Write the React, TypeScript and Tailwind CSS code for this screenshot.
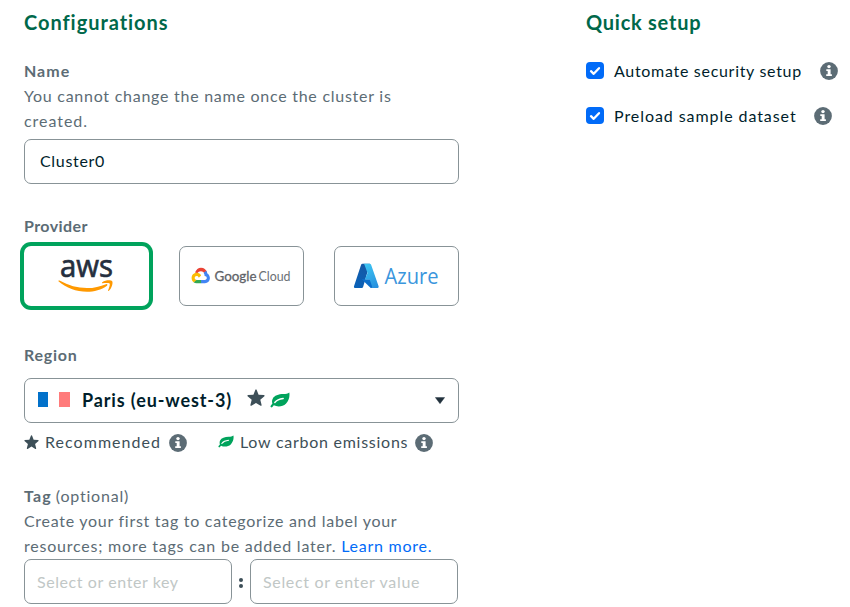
import type { ReactNode } from "react";

function InfoIcon({ className = "" }: { className?: string }) {
  return (
    <svg viewBox="0 0 18 18" className={`h-[18px] w-[18px] shrink-0 ${className}`}>
      <circle cx="9" cy="9" r="8.9" fill="#5c6c75" />
      <circle cx="9" cy="4.6" r="1.7" fill="#fff" />
      <path d="M6.300 7.200h4.300v5.100h1.300v1.700H6.200v-1.700h1.500V8.900H6.300z" fill="#fff" />
    </svg>
  );
}

function StarIcon({ className = "" }: { className?: string }) {
  return (
    <svg viewBox="0 0 18 18" className={`shrink-0 ${className}`}>
      <path
        d="M8.4.7a.65.65 0 0 1 1.2 0l2 5 5.400.400a.65.65 0 0 1 .4 1.100l-4.100 3.500 1.300 5.300a.65.65 0 0 1-1 .7L9 13.900l-4.600 2.800a.65.65 0 0 1-1-.7l1.300-5.300L.6 7.200A.65.65 0 0 1 1 6.100l5.400-.4z"
        fill="#3d4f58"
      />
    </svg>
  );
}

function LeafIcon({ className = "" }: { className?: string }) {
  return (
    <svg viewBox="0 0 20 16" className={`shrink-0 ${className}`}>
      <path
        d="M19.300.6C17.800 1.900 15.900 2 13.400 2.100 8.500 2.200 4.300 3.500 2.600 6.900c-.8 1.700-.7 3.300-.2 4.700L.7 13.700c-.8 1.200.8 2.400 1.700 1.300l1.400-1.700c3.700 1.800 9 1.400 12.100-1.600C18.800 8.900 20 4.500 19.300.6z"
        fill="#00a35c"
      />
      <path d="M4.800 10.500C6.600 8.100 9.300 6.900 13.200 6.500" fill="none" stroke="#fff" strokeWidth="1.400" strokeLinecap="round" />
    </svg>
  );
}

function AwsLogo() {
  return (
    <svg viewBox="0 0 60 48" className="h-12 w-[60px] overflow-visible">
      <text x="3" y="25.200" textLength="53" lengthAdjust="spacingAndGlyphs" fontSize="31.500" fill="#252f3e" stroke="#252f3e" strokeWidth=".7" className="font-['Open_Sans',sans-serif]">
        aws
      </text>
      <path d="M1.700 29.500c-.6-.5-.1-1.300.8-.9C11.500 33.600 20.500 36.100 30 36.100c7 0 13.200-1.500 19-3.900 1.100-.5 2 .7 1 1.500C44.500 37.700 37 39.800 30 39.800c-10.900 0-20.700-4-28.300-10.300z" fill="#ff9900" />
      <path d="M45.500 31.200c-.6 0-.7-.6-.2-1 3.200-2.200 8.700-2.300 9.900-.9 1 1.300-.3 7-3.300 9.500-.5.400-1 .2-.8-.4.900-2.200 2.200-5.700 1.500-6.800-.8-1-4.800-.7-7.100-.4z" fill="#ff9900" />
    </svg>
  );
}

function GoogleCloudLogo() {
  return (
    <svg viewBox="0 0 102 24" className="h-6 w-[102px] overflow-visible">
      <g transform="translate(0 2)">
        <path d="M4 6.600C5 3.700 7.300 1.700 10 1.700c2.900 0 5.200 1.800 6.100 4.500l-2.400 1.800c-.7-1.800-2-2.800-3.900-2.800-1.500 0-2.700.8-3.400 2z" fill="#ea4335" />
        <path d="M15.200 4.700c.6.900 1 1.700 1.200 2.700 1.500.9 2.500 2.600 2.500 4.700 0 2.900-2.100 5.100-4.900 5.100H10v-3.300h3.900c1.100 0 1.900-.8 1.900-1.800 0-1.200-.8-2-2.200-2 0-1.300-.3-2.200-1-3z" fill="#4285f4" />
        <path d="M10.100 13.900v3.300H5.600c-1.200 0-2.200-.4-3-1l2.200-2.400.8.100z" fill="#34a853" />
        <path d="M2.700 16.300C1.400 15.400.6 13.900.6 12.100c0-3 2.100-5.300 5-5.300 2.200 0 3.800 1 4.500 2.800l-2.300 2.200C7.400 10.600 6.700 10 5.700 10c-1.200 0-2 .9-2 2s.9 1.900 1.900 1.900z" fill="#fbbc04" />
      </g>
      <text x="23.500" y="17" textLength="42" lengthAdjust="spacingAndGlyphs" fontSize="13.500" fill="#5f6368" stroke="#5f6368" strokeWidth=".3" className="font-['Lato',sans-serif]">
        Google
      </text>
      <text x="67.500" y="17" textLength="32" lengthAdjust="spacingAndGlyphs" fontSize="13.500" fill="#6b7075" className="font-['Lato',sans-serif]">
        Cloud
      </text>
    </svg>
  );
}

function AzureLogo() {
  return (
    <svg viewBox="0 0 88 36" className="h-9 w-[88px] overflow-visible">
      <defs>
        <linearGradient id="azDark" x1="0.700" y1="0" x2="0.200" y2="1">
          <stop offset="0" stopColor="#1558a5" />
          <stop offset="1" stopColor="#0a62b8" />
        </linearGradient>
        <linearGradient id="azLight" x1="0.300" y1="0" x2="0.700" y2="1">
          <stop offset="0" stopColor="#3cc3f2" />
          <stop offset="1" stopColor="#2892df" />
        </linearGradient>
      </defs>
      <g transform="translate(0.500 4)">
        <path d="M9 1.800h7.400L9.600 25c-.2.600-.7 1-1.400 1H1.800C.8 26 .2 25.100.5 24.200L7.600 2.800c.2-.6.7-1 1.400-1z" fill="url(#azDark)" />
        <path d="M8.200 17.200h10l4.200 8.500-5.200.3z" fill="#0c6fcb" />
        <path d="M9.600 1.800h6.600c.6 0 1.200.4 1.400 1l7.500 21.400c.3.900-.3 1.800-1.300 1.800h-6.500c.9 0 1.500-.9 1.200-1.800l-2.300-6.700h-4.900l2.700-6.400-3-8.300c-.2-.6-.7-1-1.400-1z" fill="url(#azLight)" />
      </g>
      <text x="31.500" y="25.700" textLength="54" lengthAdjust="spacingAndGlyphs" fontSize="22" fill="#3a96dd" className="font-['Open_Sans',sans-serif]">
        Azure
      </text>
    </svg>
  );
}

function CheckRow({ children }: { children: ReactNode }) {
  return (
    <div className="flex h-[25px] items-center">
      <span role="checkbox" aria-checked="true" className="flex h-[17px] w-[18px] shrink-0 items-center justify-center rounded-[4px] bg-[#016bf8]">
        <svg viewBox="0 0 12 10" className="h-[10px] w-3">
          <path d="M2 5.200l2.700 2.600L10 2.200" fill="none" stroke="#fff" strokeWidth="2.300" strokeLinecap="round" strokeLinejoin="round" />
        </svg>
      </span>
      {children}
    </div>
  );
}

export default function App() {
  return (
    <main className="flex h-[607px] w-[850px] overflow-hidden whitespace-nowrap bg-white pl-6 pt-[10px] font-['Lato',sans-serif] text-base leading-[25px] text-[#5c6c75]">
      <section className="w-[435px] shrink-0">
        <h1 className="text-xl font-bold leading-[25px] tracking-[0.96px] text-[#00684a]">Configurations</h1>

        <div className="mt-[23px]">
          <div className="font-bold tracking-[1px]">Name</div>
          <div className="tracking-[0.74px]">You cannot change the name once the cluster is</div>
          <div className="tracking-[0.95px]">created.</div>
          <div className="mt-[6px] flex h-[45px] items-center rounded-[7px] border border-[#889397] px-[15px] pb-[2px] tracking-[0.68px] text-[#001e2b]">
            Cluster0
          </div>
        </div>

        <div className="mt-[29px]">
          <div className="font-bold tracking-[0.43px]">Provider</div>
          <div className="mt-2 grid grid-cols-3 gap-[30px]">
            <div className="flex h-[60px] items-center justify-center rounded-[7px] ring-4 ring-[#00a35c]">
              <AwsLogo />
            </div>
            <div className="flex h-[60px] items-center justify-center rounded-[7px] border border-[#889397]">
              <GoogleCloudLogo />
            </div>
            <div className="flex h-[60px] items-center justify-center rounded-[7px] border border-[#889397]">
              <AzureLogo />
            </div>
          </div>
        </div>

        <div className="mt-9">
          <div className="font-bold tracking-[0.75px]">Region</div>
          <div className="mt-[11px] flex h-[45px] items-center rounded-[7px] border border-[#889397] px-[13px]">
            <span className="mb-[2px] flex h-[15px] w-8 shrink-0 justify-between">
              <span className="w-[10px] bg-[#0271ca]" />
              <span className="w-[11px] bg-[#ff7b7b]" />
            </span>
            <span className="mb-[2px] ml-3 w-[152px] text-lg font-bold tracking-[0.88px] text-[#001e2b]">Paris (eu-west-3)</span>
            <StarIcon className="mb-[5px] ml-[13px] h-[18px] w-[18px]" />
            <LeafIcon className="mb-[2px] ml-[5px] h-4 w-5" />
            <svg viewBox="0 0 10 7" className="ml-auto h-[7px] w-[10px]">
              <path d="M.3.500h9.400L5 6.700z" fill="#21313c" stroke="#21313c" strokeWidth=".4" strokeLinejoin="round" />
            </svg>
          </div>
          <div className="mt-[6px] flex h-[25px] items-center text-[#3d4f58]">
            <StarIcon className="mt-[2px] h-[15px] w-[15px]" />
            <span className="ml-[6px] w-[117px] tracking-[1.04px]">Recommended</span>
            <InfoIcon className="ml-[7px] mt-[2px]" />
            <LeafIcon className="ml-[31px] h-[13px] w-[16px]" />
            <span className="ml-[6px] w-[169px] tracking-[0.74px]">Low carbon emissions</span>
            <InfoIcon className="ml-[6px] mt-[2px]" />
          </div>
        </div>

        <div className="mt-[29px]">
          <div>
            <span className="font-bold tracking-[1.1px]">Tag</span>{" "}
            <span className="tracking-[0.8px]">(optional)</span>
          </div>
          <div className="tracking-[0.72px]">Create your first tag to categorize and label your</div>
          <div>
            <span className="tracking-[0.78px]">resources; more tags can be added later. </span>
            <a href="#learn" className="tracking-[0.75px] text-[#016bf8]">Learn more.</a>
          </div>
          <div className="mt-px flex items-center">
            <div className="flex h-[45px] w-[208px] items-center rounded-[7px] border border-[#889397] px-3 tracking-[0.58px] text-[#c1c7c6]">
              Select or enter key
            </div>
            <div className="flex w-[18px] flex-col items-center gap-[2px] pt-[2px]">
              <span className="h-1 w-1 rounded-full bg-[#3d4f58]" />
              <span className="h-1 w-1 rounded-full bg-[#3d4f58]" />
            </div>
            <div className="flex h-[45px] w-[208px] items-center rounded-[7px] border border-[#889397] px-3 tracking-[0.66px] text-[#c1c7c6]">
              Select or enter value
            </div>
          </div>
        </div>
      </section>

      <section className="ml-[127px]">
        <h2 className="text-xl font-bold leading-[25px] tracking-[0.75px] text-[#00684a]">Quick setup</h2>
        <div className="mt-[23px] flex flex-col gap-5 text-[#001e2b]">
          <CheckRow>
            <span className="ml-[10px] w-[189px] tracking-[0.7px]">Automate security setup</span>
            <InfoIcon className="ml-[17px]" />
          </CheckRow>
          <CheckRow>
            <span className="ml-[10px] w-[183px] tracking-[0.93px]">Preload sample dataset</span>
            <InfoIcon className="ml-[17px]" />
          </CheckRow>
        </div>
      </section>
    </main>
  );
}
